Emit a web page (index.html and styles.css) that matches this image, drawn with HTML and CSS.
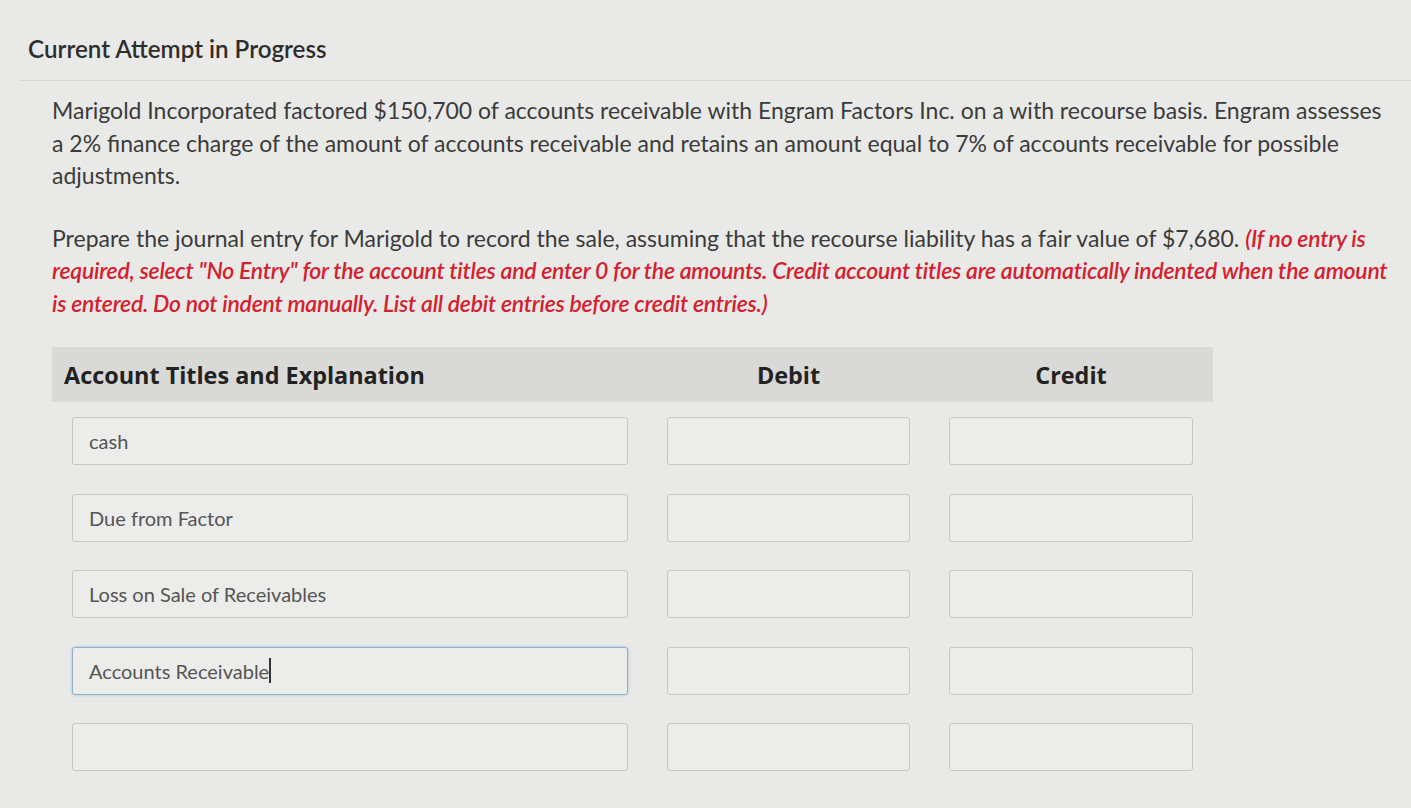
FILE: index.html
```html
<!DOCTYPE html>
<html lang="en">
<head>
  <meta charset="UTF-8">
  <title>Current Attempt in Progress</title>
  <link rel="stylesheet" href="styles.css">
</head>
<body>
  <div class="attempt">
    <h2>Current Attempt in Progress</h2>
  </div>

  <div class="question">
    <p>Marigold Incorporated factored $150,700 of accounts receivable with Engram Factors Inc. on a with recourse basis. Engram assesses a 2% finance charge of the amount of accounts receivable and retains an amount equal to 7% of accounts receivable for possible adjustments.</p>

    <p>Prepare the journal entry for Marigold to record the sale, assuming that the recourse liability has a fair value of $7,680. <em class="note">(If no entry is required, select "No Entry" for the account titles and enter 0 for the amounts. Credit account titles are automatically indented when the amount is entered. Do not indent manually. List all debit entries before credit entries.)</em></p>

    <div class="journal">
      <div class="journal-head">
        <div class="col-title">Account Titles and Explanation</div>
        <div class="col-amount">Debit</div>
        <div class="col-amount">Credit</div>
      </div>

      <div class="journal-rows">
        <div class="field">cash</div>
        <div class="field"></div>
        <div class="field"></div>

        <div class="field">Due from Factor</div>
        <div class="field"></div>
        <div class="field"></div>

        <div class="field">Loss on Sale of Receivables</div>
        <div class="field"></div>
        <div class="field"></div>

        <div class="field focused">Accounts Receivable<span class="caret"></span></div>
        <div class="field"></div>
        <div class="field"></div>

        <div class="field"></div>
        <div class="field"></div>
        <div class="field"></div>
      </div>
    </div>
  </div>
</body>
</html>
```

FILE: styles.css
```css
body {
  margin: 0;
  background: #e9e9e7;
  color: #3b3b3b;
  font-family: Lato, "Open Sans", sans-serif;
}

.attempt {
  margin-left: 20px;
  padding: 34px 0 16px 8px;
  border-bottom: 1px solid #d6d6d4;
}

.attempt h2 {
  margin: 0;
  font-size: 24.2px;
  font-weight: 600;
  line-height: 30px;
  color: #2e2e2e;
}

.question {
  width: 1340px;
  padding: 13px 0 0 52px;
}

.question p {
  margin: 0 0 30px;
  font-size: 23px;
  line-height: 32.5px;
}

.question p:last-of-type {
  margin-bottom: 0;
}

.note {
  color: #d4212f;
  font-weight: 600;
  letter-spacing: -0.25px;
}

.journal {
  width: 1161px;
  margin-top: 28px;
}

.journal-head {
  display: grid;
  grid-template-columns: 556px 243px 244px;
  column-gap: 39px;
  padding: 0 20px;
  height: 55px;
  align-items: center;
  background: #d9d9d7;
  font-family: "Open Sans", Lato, sans-serif;
  font-size: 23.4px;
  font-weight: 700;
  color: #222;
}

.col-title {
  margin-left: -8px;
}

.col-amount {
  text-align: center;
}

.journal-rows {
  display: grid;
  grid-template-columns: 556px 243px 244px;
  column-gap: 39px;
  row-gap: 28.5px;
  padding: 15px 20px;
}

.field {
  height: 48px;
  box-sizing: border-box;
  border: 1.5px solid #c6c6c4;
  border-radius: 3px;
  background: #ececea;
  padding-left: 16px;
  display: flex;
  align-items: center;
  font-size: 20px;
  color: #555;
}

.focused {
  border-color: #8cb0cf;
  box-shadow: 0 0 3px rgba(90, 150, 210, 0.5);
}

.caret {
  display: inline-block;
  width: 1.5px;
  height: 25px;
  background: #333;
}
```
